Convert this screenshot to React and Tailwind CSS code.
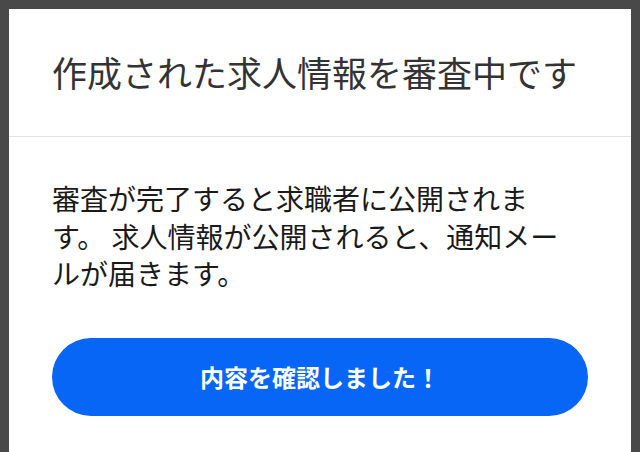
import React from "react";

const font = { fontFamily: '"Noto Sans CJK JP", "Noto Sans", sans-serif' };

const ReviewModal = () => {
  return (
    <div className="bg-white" style={font}>
      <div className="px-[43px] pt-[42px] pb-[43px] border-b border-[#e2e2e2]">
        <h1 className="text-[35px] leading-[42px] font-normal text-[#333333] whitespace-nowrap">
          作成された求人情報を審査中です
        </h1>
      </div>
      <div className="px-[43px] pt-[43px] pb-[44px]">
        <p className="w-[520px] text-[28px] leading-[37.5px] text-[#1a1a1a]">
          審査が完了すると求職者に公開されます。 求人情報が公開されると、通知メールが届きます。
        </p>
        <button
          type="button"
          className="mt-[45px] w-full h-[78px] rounded-full bg-[#0866f6] text-white text-[24px] font-bold"
        >
          内容を確認しました！
        </button>
      </div>
    </div>
  );
};

export default function App() {
  return (
    <div className="w-[640px] h-[452px] overflow-hidden bg-[#494949] pt-[9px] px-[9px]">
      <ReviewModal />
    </div>
  );
}
